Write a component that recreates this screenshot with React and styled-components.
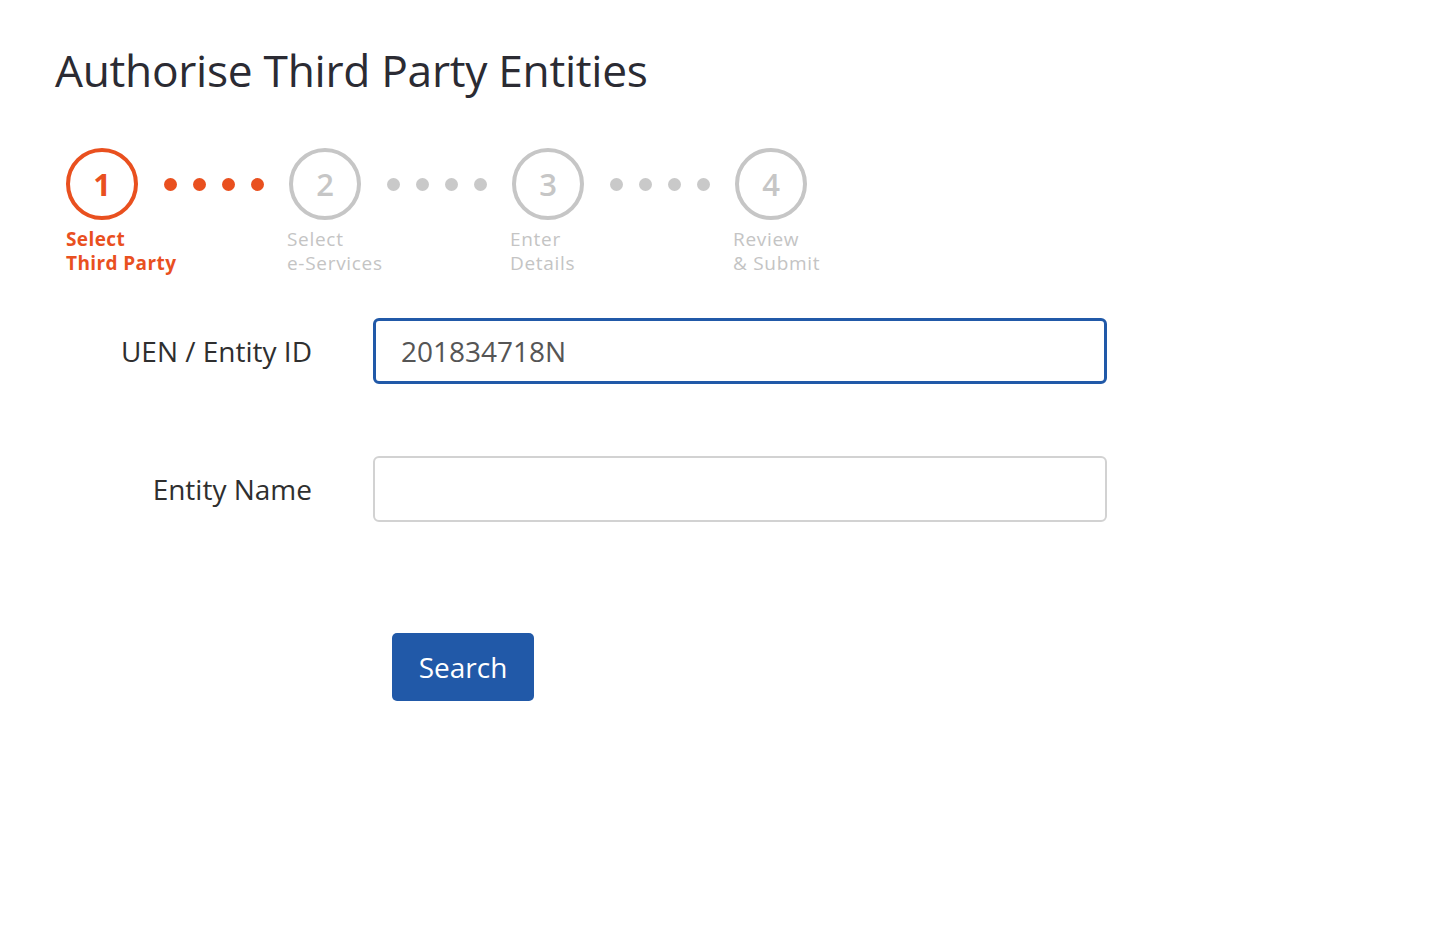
import React from "react";
import styled, { createGlobalStyle, css } from "styled-components";

const GlobalStyle = createGlobalStyle`
  body {
    margin: 0;
    background: #ffffff;
    font-family: "Open Sans", "Noto Sans", sans-serif;
  }
`;

const steps = [
  { num: 1, lines: ["Select", "Third Party"] },
  { num: 2, lines: ["Select", "e-Services"] },
  { num: 3, lines: ["Enter", "Details"] },
  { num: 4, lines: ["Review", "& Submit"] },
];

const ORANGE = "#e9501f";
const GREY = "#c6c6c6";

export default function App() {
  const current = 1;
  return (
    <>
      <GlobalStyle />
      <Page>
        <Title>Authorise Third Party Entities</Title>
        <Stepper>
          {steps.map((s, i) => (
            <React.Fragment key={s.num}>
              <Step>
                <Circle active={s.num === current}>{s.num}</Circle>
                <StepLabel active={s.num === current}>
                  {s.lines.map((l) => (
                    <LabelLine key={l}>{l}</LabelLine>
                  ))}
                </StepLabel>
              </Step>
              {i < steps.length - 1 && (
                <Dots>
                  {[0, 1, 2, 3].map((d) => (
                    <Dot key={d} active={s.num === current} />
                  ))}
                </Dots>
              )}
            </React.Fragment>
          ))}
        </Stepper>
        <Form>
          <Label htmlFor="uen">UEN / Entity ID</Label>
          <Input id="uen" focused autoFocus defaultValue="201834718N" />
          <Label htmlFor="name">Entity Name</Label>
          <Input id="name" />
        </Form>
        <ButtonRow>
          <Button>Search</Button>
        </ButtonRow>
      </Page>
    </>
  );
}

const Page = styled.div`
  padding: 40px 0 0 55px;
  color: #333;
`;

const Title = styled.h1`
  margin: 0;
  font-size: 44.3px;
  font-weight: 400;
  line-height: 60px;
  color: #2b2b33;
  letter-spacing: -0.3px;
`;

const Stepper = styled.div`
  display: flex;
  align-items: flex-start;
  margin: 48px 0 0 11px;
  height: 170px;
`;

const Step = styled.div`
  width: 72px;
  display: flex;
  flex-direction: column;
  align-items: flex-start;
`;

const Circle = styled.div`
  box-sizing: border-box;
  width: 72px;
  height: 72px;
  border-radius: 50%;
  border: 4px solid ${GREY};
  color: ${GREY};
  display: flex;
  align-items: center;
  justify-content: center;
  font-size: 31px;
  font-weight: 600;
  ${({ active }) =>
    active &&
    css`
      border-color: ${ORANGE};
      color: ${ORANGE};
      font-weight: 700;
    `}
`;

const StepLabel = styled.div`
  margin-top: 9px;
  display: flex;
  flex-direction: column;
  white-space: nowrap;
  font-size: 19px;
  font-weight: 400;
  color: #c4c4c4;
  margin-left: -2px;
  letter-spacing: 0.7px;
  ${({ active }) =>
    active &&
    css`
      color: ${ORANGE};
      font-weight: 700;
      margin-left: 0;
      letter-spacing: 0.4px;
    `}
`;

const LabelLine = styled.span`
  display: block;
  height: 24px;
  line-height: 20px;
`;

const Dots = styled.div`
  display: flex;
  gap: 16px;
  padding: 0 25px 0 26px;
  height: 72px;
  align-items: center;
`;

const Dot = styled.span`
  width: 13px;
  height: 13px;
  border-radius: 50%;
  background: ${({ active }) => (active ? ORANGE : "#c9c9c9")};
`;

const Form = styled.div`
  display: grid;
  grid-template-columns: 257px 734px;
  column-gap: 61px;
  row-gap: 72px;
  align-items: center;
`;

const Label = styled.label`
  text-align: right;
  font-size: 28px;
  color: #2f2f2f;
`;

const Input = styled.input`
  box-sizing: border-box;
  height: 66px;
  width: 100%;
  border-radius: 6px;
  border: 2px solid #d2d2d2;
  padding: 0 26px;
  font-family: "Open Sans", sans-serif;
  font-size: 28px;
  color: #555;
  caret-color: #333;
  outline: none;
  ${({ focused }) =>
    focused &&
    css`
      border: 3px solid #2159a8;
      padding-left: 25px;
    `}
`;

const ButtonRow = styled.div`
  margin: 111px 0 0 337px;
`;

const Button = styled.button`
  height: 68px;
  width: 142px;
  border: none;
  border-radius: 5px;
  background: #2159a8;
  color: #fff;
  font-family: "Open Sans", sans-serif;
  font-size: 28px;
  padding: 0;
`;
